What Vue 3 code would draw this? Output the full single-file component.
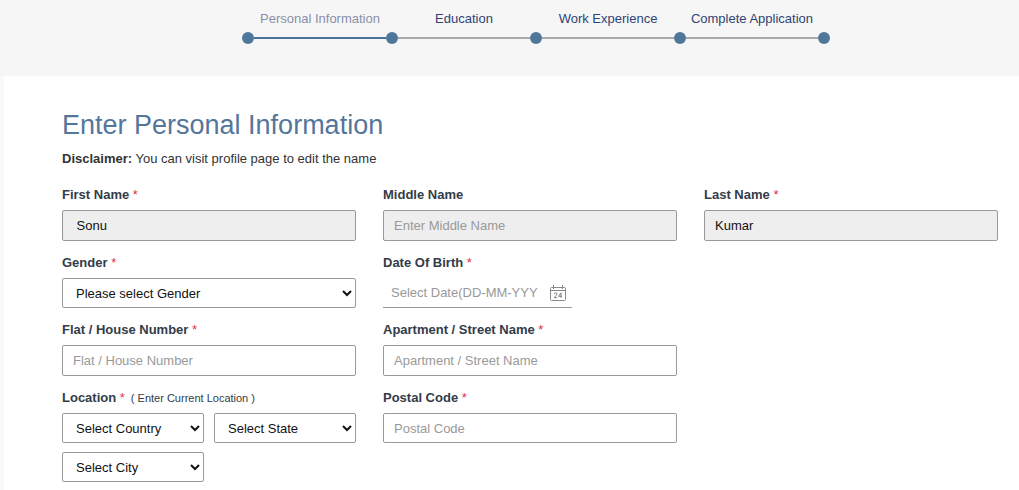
<script setup>
import { ref } from 'vue'

const steps = ['Personal Information', 'Education', 'Work Experience', 'Complete Application']
const current = ref(0)

const firstName = ref(' Sonu')
const middleName = ref('')
const lastName = ref('Kumar')
const gender = ref('')
const birthDate = ref('')
const house = ref('')
const street = ref('')
const country = ref('')
const state = ref('')
const city = ref('')
const postalCode = ref('')
</script>

<template>
  <div class="page">
    <header class="top">
      <nav class="stepper" aria-label="Application steps">
        <ol class="names">
          <li v-for="(step, i) in steps" :key="step">
            <a href="#" :class="{ active: i === current }">{{ step }}</a>
          </li>
        </ol>
        <div class="track">
          <span class="dot"></span>
          <template v-for="(step, i) in steps" :key="step">
            <span class="line" :class="{ done: i <= current }"></span>
            <span class="dot"></span>
          </template>
        </div>
      </nav>
    </header>

    <main class="card">
      <h1>Enter Personal Information</h1>
      <p class="disclaimer"><strong>Disclaimer:</strong> You can visit profile page to edit the name</p>

      <form class="form" @submit.prevent>
        <div class="field">
          <label for="first">First Name <span class="req">*</span></label>
          <input id="first" v-model="firstName" type="text" disabled />
        </div>
        <div class="field">
          <label for="middle">Middle Name</label>
          <input id="middle" v-model="middleName" type="text" placeholder="Enter Middle Name" disabled />
        </div>
        <div class="field">
          <label for="last">Last Name <span class="req">*</span></label>
          <input id="last" v-model="lastName" type="text" disabled />
        </div>

        <div class="field start">
          <label for="gender">Gender <span class="req">*</span></label>
          <select id="gender" v-model="gender">
            <option value="">Please select Gender</option>
          </select>
        </div>
        <div class="field">
          <label for="dob">Date Of Birth <span class="req">*</span></label>
          <div class="date">
            <input id="dob" v-model="birthDate" type="text" placeholder="Select Date(DD-MM-YYY" />
            <svg class="calendar" viewBox="0 0 16 16" aria-hidden="true">
              <path
                d="M1.5 2.5h13q1 0 1 1v11q0 1-1 1h-13q-1 0-1-1v-11q0-1 1-1zM.5 5.5h15M3.5 0v4M12.5 0v4"
                fill="none"
                stroke="#8a8a8a"
              />
              <path
                d="M4.2 9q.2-1.2 1.5-1.2T7 9q0 .8-2.8 3.7H7.2M11 12.8V7.9L8.5 11.3h3.6"
                fill="none"
                stroke="#777"
                stroke-width=".9"
              />
            </svg>
          </div>
        </div>

        <div class="field start">
          <label for="house">Flat / House Number <span class="req">*</span></label>
          <input id="house" v-model="house" type="text" placeholder="Flat / House Number" />
        </div>
        <div class="field">
          <label for="street">Apartment / Street Name <span class="req">*</span></label>
          <input id="street" v-model="street" type="text" placeholder="Apartment / Street Name" />
        </div>

        <div class="field start">
          <label for="country">
            Location <span class="req">*</span>
            <span class="hint">( Enter Current Location )</span>
          </label>
          <div class="places">
            <select id="country" v-model="country">
              <option value="">Select Country</option>
            </select>
            <select v-model="state" aria-label="State">
              <option value="">Select State</option>
            </select>
            <select v-model="city" aria-label="City">
              <option value="">Select City</option>
            </select>
          </div>
        </div>
        <div class="field">
          <label for="postal">Postal Code <span class="req">*</span></label>
          <input id="postal" v-model="postalCode" type="text" placeholder="Postal Code" />
        </div>
      </form>
    </main>
  </div>
</template>

<style>
body {
  background: #f9f9f9;
}
</style>

<style scoped>
.page,
input,
select {
  font-family: "Liberation Sans", Arial, sans-serif;
  font-size: 13px;
}
.page {
  display: flex;
  flex-direction: column;
  min-height: 100vh;
  color: #333;
}
.top {
  display: flex;
  justify-content: center;
  padding: 10px 0 32px 53px;
  background: #f6f6f6;
}
.stepper {
  flex: 0 1 588px;
}
.names {
  display: grid;
  grid-template-columns: repeat(4, 1fr);
  margin: 0 0 4px;
  padding: 0 6px;
  list-style: none;
  line-height: 18px;
  text-align: center;
}
.names a {
  color: #2f4375;
  text-decoration: none;
}
.names a.active {
  color: #8a8fa8;
}
.track {
  display: flex;
  align-items: center;
}
.dot {
  width: 12px;
  height: 12px;
  border-radius: 50%;
  background: #4f779b;
}
.line {
  flex: 1;
  height: 2px;
  background: #a9a9a9;
}
.line.done {
  background: #46739a;
}
.card {
  flex: 1;
  margin-left: 4px;
  padding: 32px 21px 7px 58px;
  background: #fff;
}
h1 {
  margin: 0 0 8px;
  color: #54769a;
  font-size: 27px;
  font-weight: 400;
  line-height: 34px;
}
.disclaimer {
  margin: 0 0 18px;
  line-height: 18px;
}
.form {
  display: grid;
  grid-template-columns: repeat(3, minmax(0, 1fr));
  gap: 13px 27px;
}
.start {
  grid-column-start: 1;
}
label {
  display: block;
  margin-bottom: 6px;
  color: #333c48;
  font-weight: 700;
  line-height: 18px;
  white-space: nowrap;
}
.req {
  color: #e0314b;
  font-weight: 400;
}
.hint {
  margin-left: 6px;
  font-size: 11px;
  font-weight: 400;
}
input,
select {
  box-sizing: border-box;
  display: block;
  width: 100%;
  border: 1px solid #999;
  border-radius: 2px;
  background: #fff;
  color: #111;
}
input {
  height: 31px;
  padding: 0 10px;
}
input::placeholder {
  color: #999;
  opacity: 1;
}
input:disabled {
  background: #eee;
}
select,
#postal {
  height: 30px;
}
select {
  padding: 0 1px 0 9px;
}
.places {
  display: grid;
  grid-template-columns: 1fr 1fr;
  gap: 9px 10px;
}
.date {
  box-sizing: border-box;
  display: flex;
  align-items: center;
  gap: 6px;
  max-width: 189px;
  height: 30px;
  padding: 0 6px 0 8px;
  border-bottom: 1px solid #999;
}
.date input {
  flex: 1;
  min-width: 0;
  height: 28px;
  padding: 0;
  border: 0;
}
.calendar {
  flex: none;
  width: 16px;
  height: 16px;
}
</style>
